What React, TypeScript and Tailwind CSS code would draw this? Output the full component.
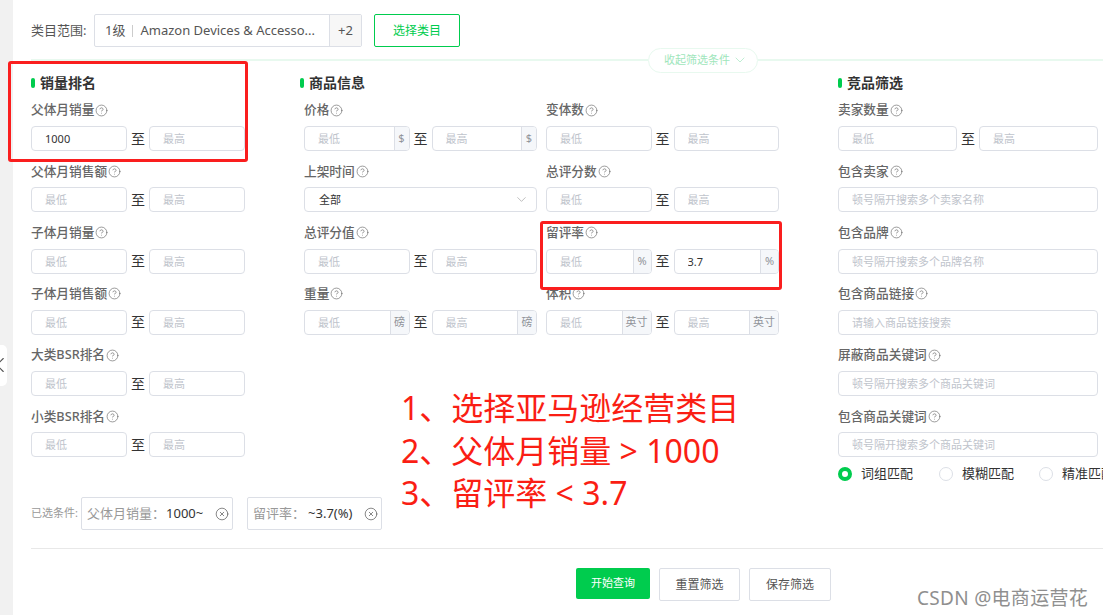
import React from 'react';
import { ChevronDown, ChevronLeft, CircleHelp, CircleX } from 'lucide-react';

type RangeProps = { label: string; unit?: string; low?: string; high?: string; unitWidth?: string };

const boxClass = 'flex h-[25px] min-w-0 flex-1 items-stretch overflow-hidden rounded-[4px] border border-[#dcdfe6] bg-white';
const inputClass = 'h-full w-full min-w-0 bg-transparent pl-[13px] text-[11px] text-[#333] outline-none placeholder:text-[#c0c4cc]';

const Label: React.FC<{ text: string }> = ({ text }) => (
  <div className="flex h-5 items-center gap-px text-[12.7px] font-medium text-[#666]">
    <span>{text}</span>
    <CircleHelp size={13} strokeWidth={1.2} className="text-[#666]" />
  </div>
);

const Box: React.FC<{ placeholder: string; value?: string; unit?: string; unitWidth?: string }> = ({ placeholder, value, unit, unitWidth }) => (
  <div className={boxClass}>
    <input className={inputClass} placeholder={placeholder} defaultValue={value} />
    {unit && (
      <span className={`flex shrink-0 items-center justify-center border-l border-[#dcdfe6] bg-[#f5f7fa] text-[11px] text-[#909399] ${unitWidth}`}>
        {unit}
      </span>
    )}
  </div>
);

const RangeField: React.FC<RangeProps> = ({ label, unit, low, high, unitWidth }) => (
  <div className="h-[61.25px]">
    <Label text={label} />
    <div className="mt-[6px] flex items-center">
      <Box placeholder="最低" value={low} unit={unit} unitWidth={unitWidth} />
      <span className="w-[22px] shrink-0 text-center text-[14px] leading-none text-[#333]">至</span>
      <Box placeholder="最高" value={high} unit={unit} unitWidth={unitWidth} />
    </div>
  </div>
);

const TextField: React.FC<{ label: string; placeholder: string }> = ({ label, placeholder }) => (
  <div className="h-[61.25px]">
    <Label text={label} />
    <div className="mt-[6px] flex">
      <Box placeholder={placeholder} />
    </div>
  </div>
);

const Heading: React.FC<{ text: string }> = ({ text }) => (
  <div className="mb-[7px] flex h-5 items-center gap-[5px] text-[14px] font-bold text-[#333]">
    <span className="h-[10px] w-1 rounded-full bg-[#00cc4e]" />
    <span className="-mt-[1px]">{text}</span>
  </div>
);

const Radio: React.FC<{ text: string; on?: boolean; className?: string }> = ({ text, on, className }) => (
  <div className={`flex shrink-0 items-center gap-[9px] text-[13px] whitespace-nowrap text-[#333] ${className ?? ''}`}>
    {on ? (
      <span className="h-[14px] w-[14px] rounded-full border-[4px] border-[#00cc4e] bg-white" />
    ) : (
      <span className="h-[14px] w-[14px] rounded-full border border-[#dcdfe6] bg-white" />
    )}
    {text}
  </div>
);

const Chip: React.FC<{ name: string; value: string; className: string; valueClass: string }> = ({ name, value, className, valueClass }) => (
  <div className={`flex h-[33px] items-center rounded-[2px] border border-[#dcdfe6] pl-[5px] text-[13px] ${className}`}>
    <span className="text-[#999]">{name}：</span>
    <span className={`text-[#333] ${valueClass}`}>{value}</span>
    <CircleX size={14} strokeWidth={1.2} className="ml-auto mr-[3px] text-[#555]" />
  </div>
);

export default function App() {
  return (
    <div className="relative flex h-[615px] w-[1103px] overflow-hidden bg-white font-['Noto_Sans','Noto_Sans_CJK_SC',sans-serif]">
      <div className="relative w-[13px] shrink-0 bg-[#f1f1f1]">
        <div className="absolute left-0 top-[345px] flex h-[41px] w-[7px] items-center overflow-hidden rounded-r-[5px] bg-white">
          <ChevronLeft size={26} strokeWidth={1} className="-ml-[13px] mt-[-1px] shrink-0 text-[#555]" />
        </div>
      </div>

      <main className="min-w-0 flex-1 pl-[18px] pt-[14px]">
        {/* category row */}
        <div className="flex h-[33px] items-center">
          <span className="w-[63px] text-[13px] text-[#555]">类目范围:</span>
          <div className="flex h-full w-[268px] items-center rounded-[2px] border border-[#dcdfe6] text-[13px] text-[#555]">
            <span className="ml-[10px]">1级</span>
            <span className="mx-[7px] h-[12px] w-px bg-[#ccc]" />
            <span className="w-[178px] whitespace-nowrap">Amazon Devices &amp; Accesso...</span>
            <span className="ml-auto flex h-full w-[32px] items-center justify-center border-l border-[#dcdfe6] bg-[#f7f7f7]">+2</span>
          </div>
          <button className="ml-3 h-full w-[86px] rounded-[2px] border border-[#00cc4e] text-[12px] text-[#00cc4e]">选择类目</button>
        </div>

        {/* collapse bar */}
        <div className="flex h-[26px] items-center">
          <div className="h-[2px] w-[617px] bg-[#e8f9ef]" />
          <div className="flex h-[25px] w-[110px] items-center justify-center gap-0.5 rounded-full border border-[#e8f9ef] pl-[6px] text-[11px] text-[#9fe6bc]">
            收起筛选条件
            <ChevronDown size={16} strokeWidth={1} />
          </div>
          <div className="h-[2px] flex-1 bg-[#e8f9ef]" />
        </div>

        {/* filter columns */}
        <div className="flex h-[424px]">
          <section className="w-[214px] shrink-0">
            <Heading text="销量排名" />
            <RangeField label="父体月销量" low="1000" />
            <RangeField label="父体月销售额" />
            <RangeField label="子体月销量" />
            <RangeField label="子体月销售额" />
            <RangeField label="大类BSR排名" />
            <RangeField label="小类BSR排名" />
          </section>

          <section className="ml-[55px] w-[479px] shrink-0">
            <Heading text="商品信息" />
            <div className="grid grid-cols-2 gap-x-[9px] pl-1">
              <RangeField label="价格" unit="$" unitWidth="w-[15px]" />
              <RangeField label="变体数" />
              <div className="h-[61.25px]">
                <Label text="上架时间" />
                <div className="mt-[6px] flex h-[25px] items-center justify-between rounded-[4px] border border-[#dcdfe6] pl-[14px] pr-[7px] text-[11px] text-[#333]">
                  全部
                  <ChevronDown size={15} strokeWidth={1} className="text-[#999]" />
                </div>
              </div>
              <RangeField label="总评分数" />
              <RangeField label="总评分值" />
              <RangeField label="留评率" unit="%" unitWidth="w-[18px]" high="3.7" />
              <RangeField label="重量" unit="磅" unitWidth="w-[19px]" />
              <RangeField label="体积" unit="英寸" unitWidth="w-[29px]" />
            </div>
          </section>

          <section className="ml-[59px] w-[260px] shrink-0">
            <Heading text="竞品筛选" />
            <RangeField label="卖家数量" />
            <TextField label="包含卖家" placeholder="顿号隔开搜索多个卖家名称" />
            <TextField label="包含品牌" placeholder="顿号隔开搜索多个品牌名称" />
            <TextField label="包含商品链接" placeholder="请输入商品链接搜索" />
            <TextField label="屏蔽商品关键词" placeholder="顿号隔开搜索多个商品关键词" />
            <TextField label="包含商品关键词" placeholder="顿号隔开搜索多个商品关键词" />
            <div className="-mt-[3.5px] flex">
              <Radio text="词组匹配" on className="w-[101px]" />
              <Radio text="模糊匹配" className="w-[100px]" />
              <Radio text="精准匹配" />
            </div>
          </section>
        </div>

        {/* selected conditions */}
        <div className="flex h-[33px] items-center">
          <span className="w-[50px] text-[11px] text-[#999]">已选条件:</span>
          <Chip name="父体月销量" value="1000~" className="w-[152px]" valueClass="ml-px" />
          <Chip name="留评率" value="~3.7(%)" className="ml-[14px] w-[135px]" valueClass="ml-[3px]" />
        </div>

        <div className="mt-[18px] h-px bg-[#e8e8e8]" />

        <div className="mt-[19px] flex pl-[545px]">
          <button className="h-[31px] w-[74px] rounded-[2px] bg-[#00cc4e] text-[11px] text-white">开始查询</button>
          <button className="ml-[9px] h-[33px] w-[81px] rounded-[2px] border border-[#dcdfe6] text-[12px] text-[#555]">重置筛选</button>
          <button className="ml-[9px] h-[33px] w-[82px] rounded-[2px] border border-[#dcdfe6] text-[12px] text-[#555]">保存筛选</button>
        </div>
      </main>

      {/* screenshot annotations */}
      <div className="absolute left-[8px] top-[61px] h-[101px] w-[240px] rounded-[3px] border-[3px] border-[#fa1e1e]" />
      <div className="absolute left-[540px] top-[221px] h-[69px] w-[242px] rounded-[3px] border-[3px] border-[#fa1e1e]" />
      <div className="absolute left-[401px] top-[387px] text-[32px] leading-[42.5px] whitespace-nowrap text-[#fa1e14]">
        <div>1、选择亚马逊经营类目</div>
        <div>2、父体月销量 &gt; 1000</div>
        <div>3、留评率 &lt; 3.7</div>
      </div>
      <div className="absolute left-[917px] top-[584px] text-[19px] tracking-[0.3px] whitespace-nowrap text-[#8f8f8f]">CSDN @电商运营花</div>
    </div>
  );
}
